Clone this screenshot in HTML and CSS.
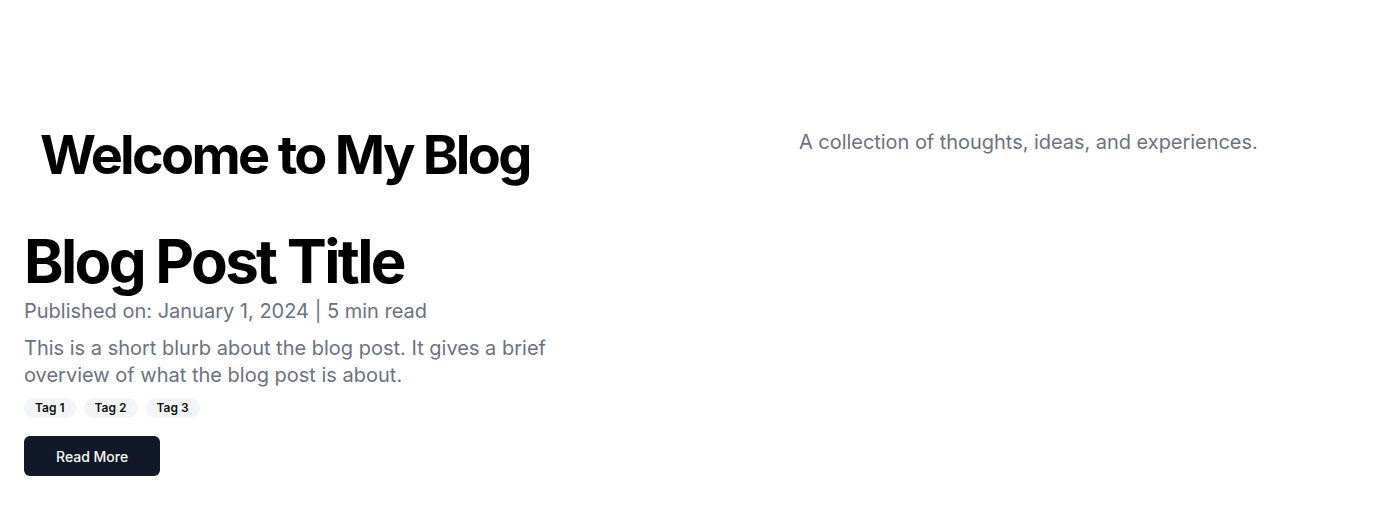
FILE: index.html
```html
<!DOCTYPE html>
<html lang="en">
<head>
<meta charset="utf-8">
<title>My Blog</title>
<link rel="stylesheet" href="styles.css">
</head>
<body>
<div class="page">
  <header class="site-header">
    <h1 class="site-title">Welcome to My Blog</h1>
    <p class="site-subtitle">A collection of thoughts, ideas, and experiences.</p>
  </header>
  <main class="posts">
    <article class="post">
      <h2 class="post-title">Blog Post Title</h2>
      <p class="post-meta">Published on: January 1, 2024 | 5 min read</p>
      <p class="post-blurb">This is a short blurb about the blog post. It gives a brief overview of what the blog post is about.</p>
      <div class="tags">
        <span class="tag">Tag 1</span>
        <span class="tag">Tag 2</span>
        <span class="tag">Tag 3</span>
      </div>
      <button class="btn">Read More</button>
    </article>
  </main>
</div>
</body>
</html>
```

FILE: styles.css
```css
* { box-sizing: border-box; }
html, body { margin: 0; padding: 0; background: #ffffff; }
body {
  font-family: Inter, "Noto Sans", sans-serif;
  color: #000;
}
.page {
  padding: 0 24px;
}
.site-header {
  display: grid;
  grid-template-columns: 775px 1fr;
  align-items: start;
  padding-top: 128px;
}
.site-title {
  margin: 0;
  padding-left: 16px;
  font-size: 54px;
  line-height: 54px;
  font-weight: 700;
  letter-spacing: -0.05em;
}
.site-subtitle {
  margin: 0;
  font-size: 20px;
  line-height: 28px;
  color: #6b7280;
  letter-spacing: -0.002em;
}
.posts {
  padding-top: 49px;
}
.post {
  display: flex;
  flex-direction: column;
  align-items: flex-start;
}
.post-title {
  margin: 0;
  font-size: 60px;
  line-height: 60px;
  font-weight: 700;
  letter-spacing: -0.045em;
}
.post-meta {
  margin: 6px 0 0;
  font-size: 20px;
  line-height: 28px;
  color: #6b7280;
}
.post-blurb {
  margin: 10px 0 0;
  max-width: 576px;
  font-size: 20px;
  line-height: 27px;
  color: #6b7280;
}
.tags {
  display: flex;
  gap: 8px;
  margin-top: 9px;
}
.tag {
  display: inline-block;
  padding: 2px 11px;
  border-radius: 9999px;
  background: #f3f4f6;
  font-size: 12px;
  line-height: 16px;
  font-weight: 600;
  color: #111;
}
.btn {
  margin-top: 18px;
  height: 40px;
  padding: 0 32px;
  border: none;
  border-radius: 6px;
  background: #111827;
  color: #f9fafb;
  font-family: Inter, "Noto Sans", sans-serif;
  font-size: 14px;
  font-weight: 500;
}
```
